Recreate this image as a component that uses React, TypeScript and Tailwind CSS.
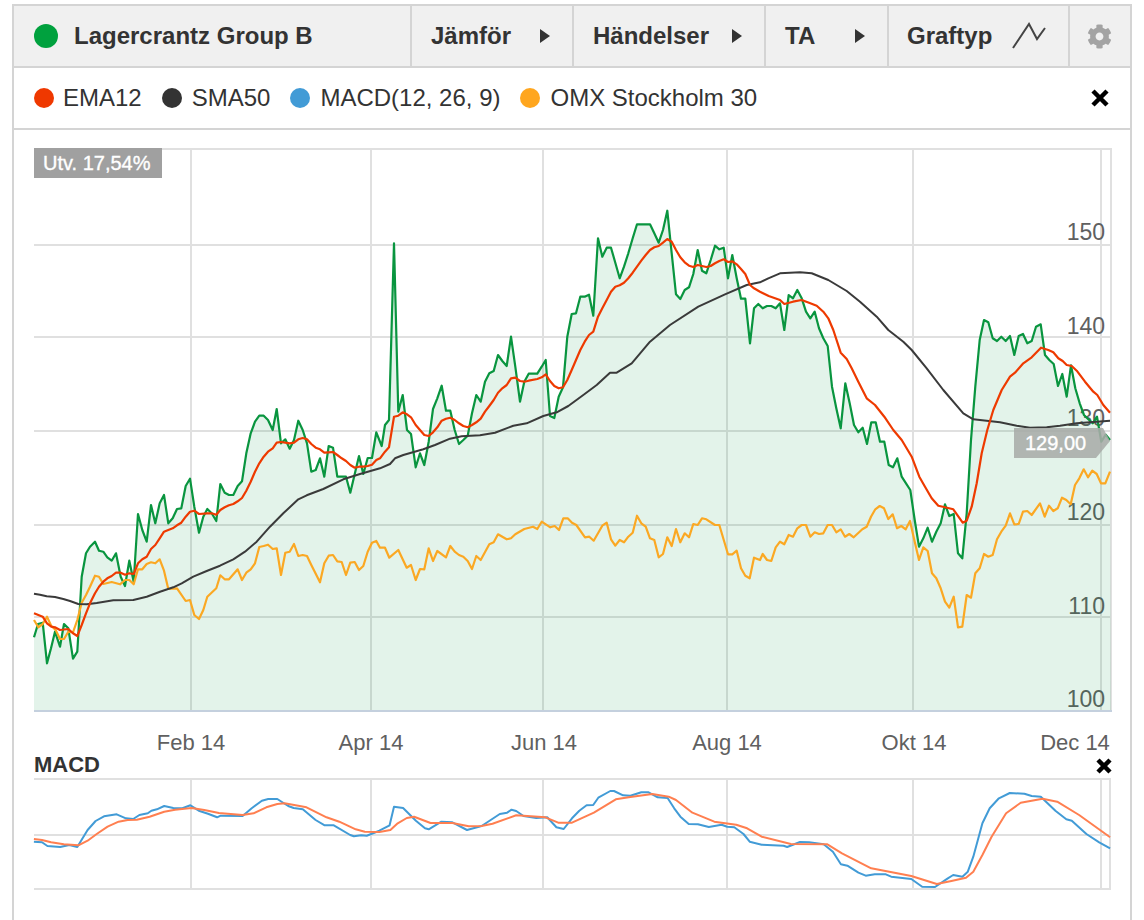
import { FaCog } from "react-icons/fa";

type Seg = { ox: number; oy: number; sx?: number; pts: number[] };

// traced series, each segment is in its own crop space (scale 3 unless sx says otherwise)
const toPoints = (segs: Seg[]) => {
  const out: [number, number][] = [];
  segs.forEach(({ ox, oy, sx = 3, pts }) => {
    for (let i = 0; i < pts.length; i += 2) {
      out.push([ox + pts[i] / sx, oy + pts[i + 1] / 3]);
    }
  });
  return out;
};

const line = (segs: Seg[]) =>
  toPoints(segs)
    .map(([x, y]) => x.toFixed(1) + "," + y.toFixed(1))
    .join(" ");

const green: Seg[] = [
  { ox: 0, oy: 400, pts: [102,712,114,672,128,668,141,790,153,745,165,695,180,740,192,672,205,685,219,776,232,755,245,530,258,460,270,440,285,425,297,452,310,455,322,472,335,482,348,460,362,530,375,558,388,482,401,545,414,342,427,390,440,425,453,315,466,370,479,310,492,285,505,370,518,355,531,327,544,325,557,258,570,236,583,320,597,398,610,350,622,327,635,340,649,363,661,252,674,278,687,285,700,285,713,258,726,244,739,160,752,100,765,65,778,47,791,47,804,60,818,90,830,27,843,130,856,118,869,146,882,120,895,62,908,90,921,130,934,215,947,210,960,175,973,230,986,138,999,143,1012,230,1038,230,1051,278,1077,168,1090,222,1103,174,1116,174,1129,97] },
  { ox: 380, oy: 200, pts: [5,738,15,675,27,660,42,130,55,635,68,585,81,690,93,702,107,802,120,760,133,795,146,725,159,627,172,595,185,557,198,632,211,632,224,690,237,732,250,720,263,707,276,640,289,585,302,605,315,545,328,520,341,513,354,465,367,483,380,498,393,410,406,500,420,605,433,545,446,521,472,521,485,500,497,480,510,648,523,654,536,590,549,562,562,410,575,342,588,340,601,290,614,290,627,284,640,347,654,115,667,170,680,143,693,143,706,188,719,235,732,200,745,160,758,115,771,73,810,73,823,100,836,128,849,90,862,32,875,160,888,283,901,297,914,270,927,262,940,222,953,150,966,212,979,220,992,180,1005,137,1018,148,1031,143,1044,235,1057,165,1070,235,1083,296,1096,296,1110,430,1122,325,1135,312] },
  { ox: 760, oy: 260, pts: [8,145,21,138,34,138,47,145,60,130,73,210,86,105,99,115,112,90,125,115,138,155,151,175,164,155,177,205,190,235,203,258,216,380,229,445,242,505,256,370,269,430,282,495,295,517,308,503,321,552,334,487,347,487,360,545,373,545,386,615,399,622,412,595,425,650,438,670,451,690,464,780,477,860,490,835,503,803,516,845,529,815,542,790,555,733,568,768,581,762,594,880,607,895,620,760,633,540,646,380,659,240,672,180,685,187,698,235,711,243,724,230,737,243,750,228,763,285,776,228,789,222,802,250,815,243,828,200,842,193,855,285,868,300,881,312,894,378,907,342,920,410,933,316,946,385,959,430,972,465,985,478,998,490,1011,470,1024,545,1037,524,1050,540] },
];

const red: Seg[] = [
  { ox: 0, oy: 400, pts: [102,640,128,650,141,670,154,680,165,682,180,690,205,687,219,700,232,708,245,675,258,640,270,610,285,580,297,560,310,545,322,535,335,528,348,518,362,518,375,524,388,520,401,522,414,490,427,478,440,470,453,447,466,435,479,415,492,395,505,390,518,385,531,376,544,368,557,350,570,335,583,332,597,342,622,340,635,340,649,344,661,330,674,322,687,316,700,312,713,304,726,294,739,272,752,245,765,215,778,190,791,170,804,155,818,145,830,128,843,126,856,128,869,130,882,128,895,118,908,114,921,118,934,132,947,143,960,148,973,158,986,157,999,156,1012,165,1025,175,1038,183,1051,195,1064,203,1077,200,1090,200,1103,198,1116,194,1129,180] },
  { ox: 380, oy: 200, pts: [0,775,15,755,27,742,42,650,55,647,68,637,81,643,93,652,107,675,120,690,133,705,146,708,159,697,172,682,185,662,198,656,211,653,224,660,237,670,250,678,263,682,276,675,289,667,302,656,315,635,328,618,341,600,354,578,367,565,380,555,393,535,406,533,420,543,433,545,446,542,472,537,485,532,497,523,510,543,523,558,536,565,549,562,562,540,575,510,588,480,601,450,614,425,627,405,640,395,654,350,667,325,680,300,693,275,706,260,719,256,732,248,745,235,758,218,771,200,784,182,797,165,810,150,823,142,836,138,849,128,862,117,875,125,888,150,901,172,914,187,927,197,940,201,953,195,966,198,979,201,992,198,1005,190,1018,183,1031,178,1044,186,1057,184,1070,193,1083,207,1096,222,1110,255,1122,265] },
  { ox: 760, oy: 260, pts: [0,95,26,108,60,120,73,132,99,125,125,120,151,130,170,137,190,155,205,175,220,210,242,278,260,297,275,325,295,365,320,415,345,435,373,470,400,510,425,540,455,590,478,650,495,680,515,715,535,737,555,742,580,748,608,788,620,782,635,740,650,670,665,580,682,510,700,450,725,390,750,350,765,338,790,310,815,292,843,263,865,270,880,277,895,295,908,303,920,315,935,318,950,332,975,365,1000,395,1012,405,1030,435,1050,458] },
];

const black: Seg[] = [
  { ox: 0, oy: 400, pts: [102,581,120,584,140,589,165,591,190,597,210,603,235,612,260,613,290,609,340,601,400,600,440,590,480,575,520,562,545,550,580,530,620,513,660,497,700,478,735,455,770,425,810,380,850,340,895,298,920,286,970,267,1030,238,1080,222] },
  { ox: 380, oy: 200, pts: [0,805,30,792,45,775,70,765,130,748,165,735,210,716,245,709,300,706,345,698,400,677,440,670,490,648,530,637,565,618,610,585,650,555,690,518,710,518,755,490,810,425,870,375,955,320,1035,283,1100,255] },
  { ox: 760, oy: 260, pts: [0,67,25,55,60,40,120,37,155,40,205,60,260,93,300,125,350,170,385,210,430,245,455,270,500,325,550,390,610,460,640,478,720,487,770,497,810,503,860,502,900,497,950,490,1010,485,1050,482] },
];

const orange: Seg[] = [
  { ox: 0, oy: 400, pts: [102,660,115,682,128,672,141,650,154,678,167,690,180,717,192,717,205,695,219,697,232,660,245,608,258,585,270,560,285,527,297,530,310,552,335,546,360,553,375,540,388,540,401,553,414,508,427,508,440,492,453,487,466,490,479,478,492,512,505,567,531,565,557,603,570,600,583,645,597,657,610,630,622,590,649,565,661,526,674,538,687,538,713,508,726,540,739,518,752,508,765,490,778,441,791,438,804,434,818,447,830,445,843,525,856,458,869,455,882,432,895,468,908,465,921,468,934,495,960,547,973,490,986,467,999,465,1012,484,1025,486,1038,525,1051,488,1064,486,1077,510,1090,498,1103,455,1116,428,1129,423] },
  { ox: 380, oy: 200, pts: [0,1043,15,1043,28,1073,55,1050,80,1103,93,1095,107,1140,120,1107,133,1108,146,1045,159,1083,172,1053,198,1072,211,1038,224,1055,237,1065,250,1070,263,1083,276,1107,289,1068,302,1080,328,1033,341,1027,354,1003,380,1018,393,1015,406,1003,433,987,459,980,472,987,485,965,511,982,524,978,537,990,550,955,563,955,576,968,589,975,615,1012,628,1010,641,1022,667,977,680,968,693,1018,706,1037,719,1020,732,1027,745,1010,758,998,771,947,784,970,797,980,810,1015,823,1020,836,1072,849,1062,862,1012,875,1038,888,987,901,1027,914,1000,927,1012,940,972,953,975,966,955,979,958,1005,975,1018,975,1044,1063,1057,1063,1070,1052,1083,1105,1096,1127,1109,1135,1122,1073] },
  { ox: 760, oy: 260, pts: [0,900,8,882,21,900,34,903,47,862,60,845,73,853,86,825,99,830,112,805,125,795,138,795,151,830,164,817,177,822,190,820,203,795,216,795,229,817,242,808,255,830,268,822,281,832,307,808,320,800,333,770,346,748,359,738,372,745,385,777,398,763,411,805,424,798,437,808,450,783,463,840,477,900,490,862,503,873,516,940,529,955,542,985,555,1025,568,1043,581,1010,594,1102,607,1100,620,1005,633,1013,646,940,659,925,672,882,685,890,698,885,711,838,724,815,737,797,750,760,763,793,776,792,789,755,802,753,815,765,840,730,854,770,867,737,880,753,893,745,906,713,919,720,932,733,945,675,958,655,971,628,984,652,997,632,1010,642,1023,670,1036,670,1050,635] },
];

const macdBlue: Seg[] = [
  { ox: 0, oy: 720, sx: 2.741, pts: [93,365,115,367,130,378,165,381,190,375,212,381,240,330,262,303,285,289,320,283,345,295,365,297,382,285,405,280,415,272,430,268,450,258,475,264,500,265,522,256,545,272,570,281,595,292,605,287,665,288,690,265,718,242,735,237,760,237,790,258,805,264,830,268,865,300,890,316,915,316,960,345,970,349,990,346,1005,347,1040,332,1068,316,1080,260,1105,264,1140,302,1165,325,1175,328,1210,305,1240,307,1280,330,1320,318,1370,282,1390,278,1402,269,1415,273,1435,288,1470,294,1500,292,1525,322,1545,327] },
  { ox: 572, oy: 720, sx: 2.741, pts: [0,295,20,272,40,256,58,255,72,233,105,213,115,213,140,226,160,227,190,217,210,217,235,232,262,234,280,265,297,290,320,312,345,313,375,321,410,314,425,320,445,322,470,342,487,365,520,374,580,377,590,381,625,366,650,367,690,373,715,395,737,433,755,437,785,458,805,467,830,463,860,463,875,470,930,477,960,500,995,501,1030,475,1045,465,1070,470,1085,455,1100,410,1125,310,1145,265,1170,235,1200,219,1240,221,1260,228,1285,230,1325,272,1355,298,1370,302,1410,342,1445,367,1475,385] },
];

const macdSignal: Seg[] = [
  { ox: 0, oy: 720, sx: 2.741, pts: [93,357,115,360,140,367,175,373,215,376,240,362,265,342,295,320,325,305,350,300,375,299,410,290,450,275,480,269,525,264,560,270,600,279,665,285,695,280,730,262,760,252,780,250,840,262,895,292,930,305,975,328,1000,335,1040,336,1070,330,1090,310,1115,294,1135,290,1180,309,1240,309,1285,319,1320,318,1350,311,1415,286,1495,292,1530,308] },
  { ox: 572, oy: 720, sx: 2.741, pts: [0,308,60,278,120,238,160,231,220,222,265,230,285,240,330,278,390,305,450,314,480,325,520,350,600,372,700,373,740,400,820,445,930,468,1000,492,1040,483,1080,473,1100,455,1125,405,1150,350,1190,280,1230,248,1290,236,1330,245,1390,285,1475,352] },
];

const vLines = [191, 371, 543, 727, 913, 1101];
const hLines = [149, 245, 337, 431, 525, 617];
const yLabels = [
  { y: 240, label: "150" },
  { y: 334, label: "140" },
  { y: 426, label: "130" },
  { y: 520, label: "120" },
  { y: 614, label: "110" },
  { y: 707, label: "100" },
];
const xLabels = [
  { x: 191, label: "Feb 14" },
  { x: 371, label: "Apr 14" },
  { x: 544, label: "Jun 14" },
  { x: 727, label: "Aug 14" },
  { x: 914, label: "Okt 14" },
  { x: 1075, label: "Dec 14" },
];
const legend = [
  { color: "bg-[#ef3800]", label: "EMA12", gap: "mr-[20px]", dotGap: "mr-[9px]" },
  { color: "bg-[#333333]", label: "SMA50", gap: "mr-[20px]", dotGap: "mr-[10px]" },
  { color: "bg-[#429bd6]", label: "MACD(12, 26, 9)", gap: "mr-[20px]", dotGap: "mr-[10px]" },
  { color: "bg-[#ffa61e]", label: "OMX Stockholm 30", gap: "", dotGap: "mr-[10px]" },
];

function Arrow() {
  return <span className="w-0 h-0 border-y-[7px] border-y-transparent border-l-[10px] border-l-[#333333]" />;
}

function MenuCell({ label, width }: { label: string; width: string }) {
  return (
    <div className={`${width} flex items-center justify-between pl-[19px] pr-[22px] border-r-2 border-[#d4d4d4]`}>
      <span className="font-bold">{label}</span>
      <Arrow />
    </div>
  );
}

export default function App() {
  const area = "34,711 " + line(green) + " 1111,711";

  return (
    <div className="h-[920px] overflow-hidden bg-white pt-[4px] pl-[12px] font-['Liberation_Sans',sans-serif] text-[#333333]">
      <div className="w-[1120px] h-[916px] border-2 border-b-0 border-[#d4d4d4]">
        {/* Header */}
        <div className="flex h-[62px] bg-[#f0f0f0] border-b-2 border-[#d4d4d4] text-[24px]">
          <div className="w-[398px] flex items-center pl-[20px] border-r-2 border-[#d4d4d4]">
            <span className="w-[24px] h-[24px] rounded-full bg-[#00a13e] mr-[16px]" />
            <span className="font-bold">Lagercrantz Group B</span>
          </div>
          <MenuCell label="Jämför" width="w-[162px]" />
          <MenuCell label="Händelser" width="w-[192px]" />
          <MenuCell label="TA" width="w-[123px]" />
          <div className="w-[181px] flex items-center pl-[18px] border-r-2 border-[#d4d4d4]">
            <span className="font-bold">Graftyp</span>
            <svg width="36" height="28" viewBox="0 0 36 28" className="ml-[20px]">
              <path d="M1 26L17 2L25 17L33 6" fill="none" stroke="#444444" strokeWidth="2" />
            </svg>
          </div>
          <div className="flex-1 flex items-center justify-center pr-[2px]">
            <FaCog className="text-[#a3a3a3] w-[25px] h-[25px]" />
          </div>
        </div>

        {/* Legend */}
        <div className="flex items-center justify-between h-[62px] border-b-2 border-[#d4d4d4] pl-[20px] pr-[20px] text-[24px]">
          <div className="flex items-center">
            {legend.map((item) => (
              <div key={item.label} className={`flex items-center ${item.gap}`}>
                <span className={`w-[20px] h-[20px] rounded-full ${item.color} ${item.dotGap}`} />
                <span>{item.label}</span>
              </div>
            ))}
          </div>
          <svg width="18" height="18" viewBox="0 0 18 18" className="mr-[1px]">
            <path d="M2 2L16 16M16 2L2 16" stroke="#000" strokeWidth="4.5" fill="none" />
          </svg>
        </div>

        {/* Chart */}
        <svg width="1116" height="790" viewBox="14 130 1116 790" className="block">
          {/* Grid */}
          <g stroke="#e0e0e0" strokeWidth="2">
            {hLines.map((y) => (
              <line key={y} x1="34" x2="1112" y1={y} y2={y} />
            ))}
            {vLines.map((x) => (
              <line key={x} x1={x} x2={x} y1="149" y2="711" />
            ))}
            <line x1="1111" x2="1111" y1="149" y2="711" />
          </g>

          <g fontSize="23" fill="#606060" textAnchor="end">
            {yLabels.map((t) => (
              <text key={t.label} x="1105" y={t.y}>
                {t.label}
              </text>
            ))}
          </g>
          <g fontSize="22" fill="#606060" textAnchor="middle">
            {xLabels.map((t) => (
              <text key={t.label} x={t.x} y="750">
                {t.label}
              </text>
            ))}
          </g>

          {/* Price series */}
          <polygon points={area} fill="#00913c" fillOpacity="0.11" />
          <line x1="34" x2="1112" y1="711" y2="711" stroke="#c4d0de" strokeWidth="2" />
          <g fill="none" strokeWidth="2.2" strokeLinejoin="round">
            <polyline points={line(green)} stroke="#09953f" />
            <polyline points={line(orange)} stroke="#fba823" />
            <polyline points={line(black)} stroke="#3a3a3a" strokeWidth="2" />
            <polyline points={line(red)} stroke="#ee3a00" />
          </g>

          {/* Badges */}
          <rect x="34" y="148" width="128" height="30" fill="#a0a0a0" />
          <text x="43" y="170" fontSize="20" fill="#fff" stroke="#fff" strokeWidth="0.35">
            Utv. 17,54%
          </text>
          <polygon points="1014,428 1103,428 1110,441 1096,458 1014,458" fill="#a8aca8" fillOpacity="0.88" />
          <text x="1025" y="450" fontSize="20" fill="#fff" stroke="#fff" strokeWidth="0.35">
            129,00
          </text>

          {/* MACD panel */}
          <text x="34" y="772" fontSize="22" fontWeight="700" fill="#333333">
            MACD
          </text>
          <path d="M1098 760L1110 772M1110 760L1098 772" stroke="#000" strokeWidth="4.5" fill="none" />
          <g stroke="#e0e0e0" strokeWidth="2">
            {[779, 835, 889].map((y) => (
              <line key={y} x1="34" x2="1111" y1={y} y2={y} />
            ))}
            {vLines.map((x) => (
              <line key={x} x1={x} x2={x} y1="779" y2="889" />
            ))}
            <line x1="1110" x2="1110" y1="779" y2="889" />
          </g>
          <g fill="none" strokeWidth="2" strokeLinejoin="round">
            <polyline points={line(macdBlue)} stroke="#429bd6" />
            <polyline points={line(macdSignal)} stroke="#ff7f50" />
          </g>
        </svg>
      </div>
    </div>
  );
}
